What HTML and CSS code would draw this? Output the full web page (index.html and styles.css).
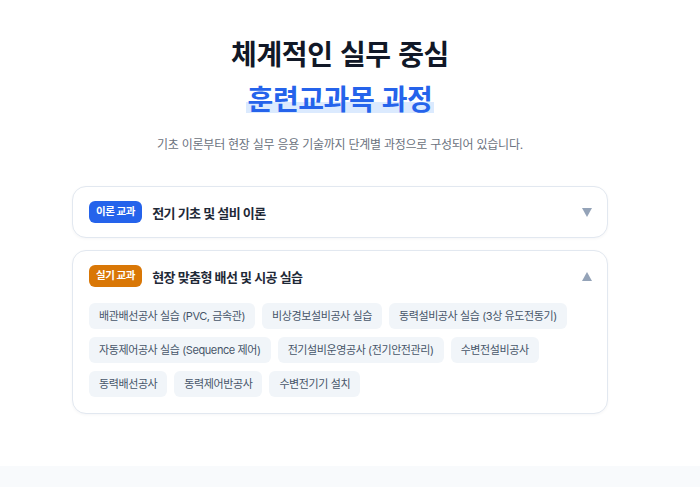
FILE: index.html
```html
<!DOCTYPE html>
<html lang="ko">
<head>
    <meta charset="UTF-8">
    <meta name="viewport" content="width=device-width, initial-scale=1.0">
    <title>훈련교과목 과정</title>
    <link rel="stylesheet" href="styles.css">
</head>
<body>
    <main class="curriculum">
        <section class="intro">
            <h2 class="intro-title">체계적인 실무 중심<br><span class="highlight">훈련교과목 과정</span></h2>
            <p class="intro-desc">기초 이론부터 현장 실무 응용 기술까지 단계별 과정으로 구성되어 있습니다.</p>
        </section>
        <section class="course-list">
            <div class="course-card">
                <div class="course-head">
                    <span class="badge badge-theory">이론 교과</span>
                    <h3 class="course-name">전기 기초 및 설비 이론</h3>
                    <span class="arrow arrow-down"></span>
                </div>
            </div>
            <div class="course-card open">
                <div class="course-head">
                    <span class="badge badge-practice">실기 교과</span>
                    <h3 class="course-name">현장 맞춤형 배선 및 시공 실습</h3>
                    <span class="arrow arrow-up"></span>
                </div>
                <div class="tag-list">
                    <span class="tag">배관배선공사 실습 (PVC, 금속관)</span>
                    <span class="tag">비상경보설비공사 실습</span>
                    <span class="tag">동력설비공사 실습 (3상 유도전동기)</span>
                    <span class="tag">자동제어공사 실습 (Sequence 제어)</span>
                    <span class="tag">전기설비운영공사 (전기안전관리)</span>
                    <span class="tag">수변전설비공사</span>
                    <span class="tag">동력배선공사</span>
                    <span class="tag">동력제어반공사</span>
                    <span class="tag">수변전기기 설치</span>
                </div>
            </div>
        </section>
    </main>
    <div class="next-section"></div>
</body>
</html>
```

FILE: styles.css
```css
* {
    margin: 0;
    padding: 0;
    box-sizing: border-box;
}
body {
    font-family: 'Inter', 'Noto Sans CJK KR', sans-serif;
    background: #ffffff;
    color: #1f2937;
}
.curriculum { padding: 31px 20px 52px 0; }
.intro { text-align: center; }
.intro-title { font-family: 'Noto Sans CJK KR', sans-serif; font-size: 28px; font-weight: 700; line-height: 45px; color: #111827; letter-spacing: -0.4px; }
.highlight { color: #2563eb; background: linear-gradient(to bottom, transparent 60%, #dbeafe 60%, #dbeafe 88%, transparent 88%); padding: 0 2px; }
.intro-desc { margin-top: 14px; font-size: 12px; line-height: 20px; color: #6b7280; letter-spacing: -0.25px; }
.course-list { width: 536px; margin: 31px auto 0; display: flex; flex-direction: column; gap: 12px; }
.course-card { background: #fff; border: 1px solid #e2e8f0; border-radius: 14px; box-shadow: 0 1px 3px rgba(15, 23, 42, 0.04); padding: 14px 15px 14px 16px; }
.course-card.open { padding-bottom: 16px; }
.course-head { display: flex; align-items: center; gap: 10px; }
.badge { display: inline-block; padding: 0 7px; height: 22px; line-height: 22px; border-radius: 6px; font-size: 10.5px; font-weight: 700; color: #fff; letter-spacing: -0.4px; }
.badge-theory { background: #2563eb; }
.badge-practice { background: #d97706; }
.course-name { flex: 1; font-size: 13px; font-weight: 700; color: #1f2937; letter-spacing: -0.5px; }
.arrow { width: 0; height: 0; border-left: 5.5px solid transparent; border-right: 5.5px solid transparent; }
.arrow-down { border-top: 9px solid #94a3b8; }
.arrow-up { border-bottom: 9px solid #94a3b8; }
.tag-list { display: flex; flex-wrap: wrap; gap: 8px 7px; margin-top: 16px; }
.tag { display: inline-block; background: #f1f5f9; border-radius: 6px; padding: 0 10px; height: 26px; line-height: 26px; font-size: 11px; color: #475569; letter-spacing: -0.4px; }
.next-section { height: 22px; background: #f8fafc; }
```
